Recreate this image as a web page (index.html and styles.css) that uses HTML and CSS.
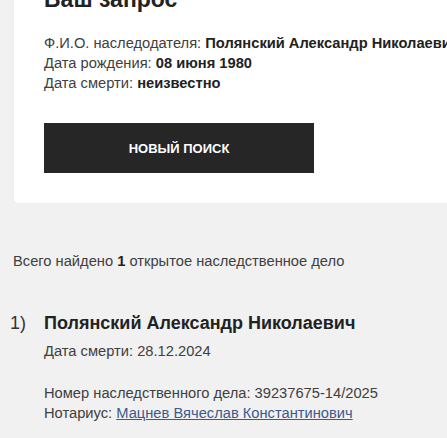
FILE: index.html
```html
<!DOCTYPE html>
<html lang="ru">
<head>
<meta charset="utf-8">
<link rel="stylesheet" href="styles.css">
</head>
<body>
<section class="card">
  <h1 class="title">Ваш запрос</h1>
  <div class="info">
    <p>Ф.И.О. наследодателя: <b>Полянский Александр Николаевич</b></p>
    <p>Дата рождения: <b>08 июня 1980</b></p>
    <p>Дата смерти: <b>неизвестно</b></p>
  </div>
  <button class="btn" type="button">Новый поиск</button>
</section>
<p class="total">Всего найдено <b>1</b> открытое наследственное дело</p>
<ol class="results">
  <li class="result">
    <span class="num">1)</span>
    <div class="body">
      <h2 class="name">Полянский Александр Николаевич</h2>
      <p class="death">Дата смерти: 28.12.2024</p>
      <p>Номер наследственного дела: 39237675-14/2025</p>
      <p>Нотариус: <a href="#">Мацнев Вячеслав Константинович</a></p>
    </div>
  </li>
</ol>
</body>
</html>
```
FILE: styles.css
```css
html, body {
  margin: 0;
  padding: 0;
}
body {
  background: #f1f1f1;
  font-family: "Liberation Sans", Arial, sans-serif;
  color: #404040;
  font-size: 14.7px;
  line-height: 20px;
  overflow: hidden;
}
p { margin: 0; white-space: nowrap; }
b { color: #222; font-weight: bold; }

.card {
  background: #fff;
  margin: 0 -30px 0 14px;
  padding: 0 30px 30px 30px;
  border-radius: 4px;
  box-shadow: 0 0 2px rgba(0,0,0,0.06);
}
.title {
  margin: -16px 0 0 0;
  font-size: 23px;
  line-height: 30px;
  font-weight: bold;
  color: #222;
}
.info {
  margin-top: 19px;
}
.btn {
  display: block;
  margin-top: 30px;
  width: 270px;
  height: 50px;
  border: 0;
  border-radius: 0;
  background: #262626;
  color: #fff;
  font-family: "Liberation Sans", Arial, sans-serif;
  font-size: 13px;
  font-weight: bold;
  text-transform: uppercase;
  padding: 0;
}
.total {
  margin: 48px 0 0 13px;
}
.results {
  list-style: none;
  margin: 40px 0 0 0;
  padding: 0;
}
.result {
  display: flex;
}
.num {
  width: 44px;
  box-sizing: border-box;
  padding-left: 10px;
  font-size: 18px;
  line-height: 24px;
  color: #333;
}
.name {
  margin: 0;
  font-size: 18px;
  line-height: 24px;
  font-weight: bold;
  color: #222;
  white-space: nowrap;
}
.death {
  margin: 6px 0 22px 0;
}
a {
  color: #3b5a8c;
  text-decoration: underline;
}
```
